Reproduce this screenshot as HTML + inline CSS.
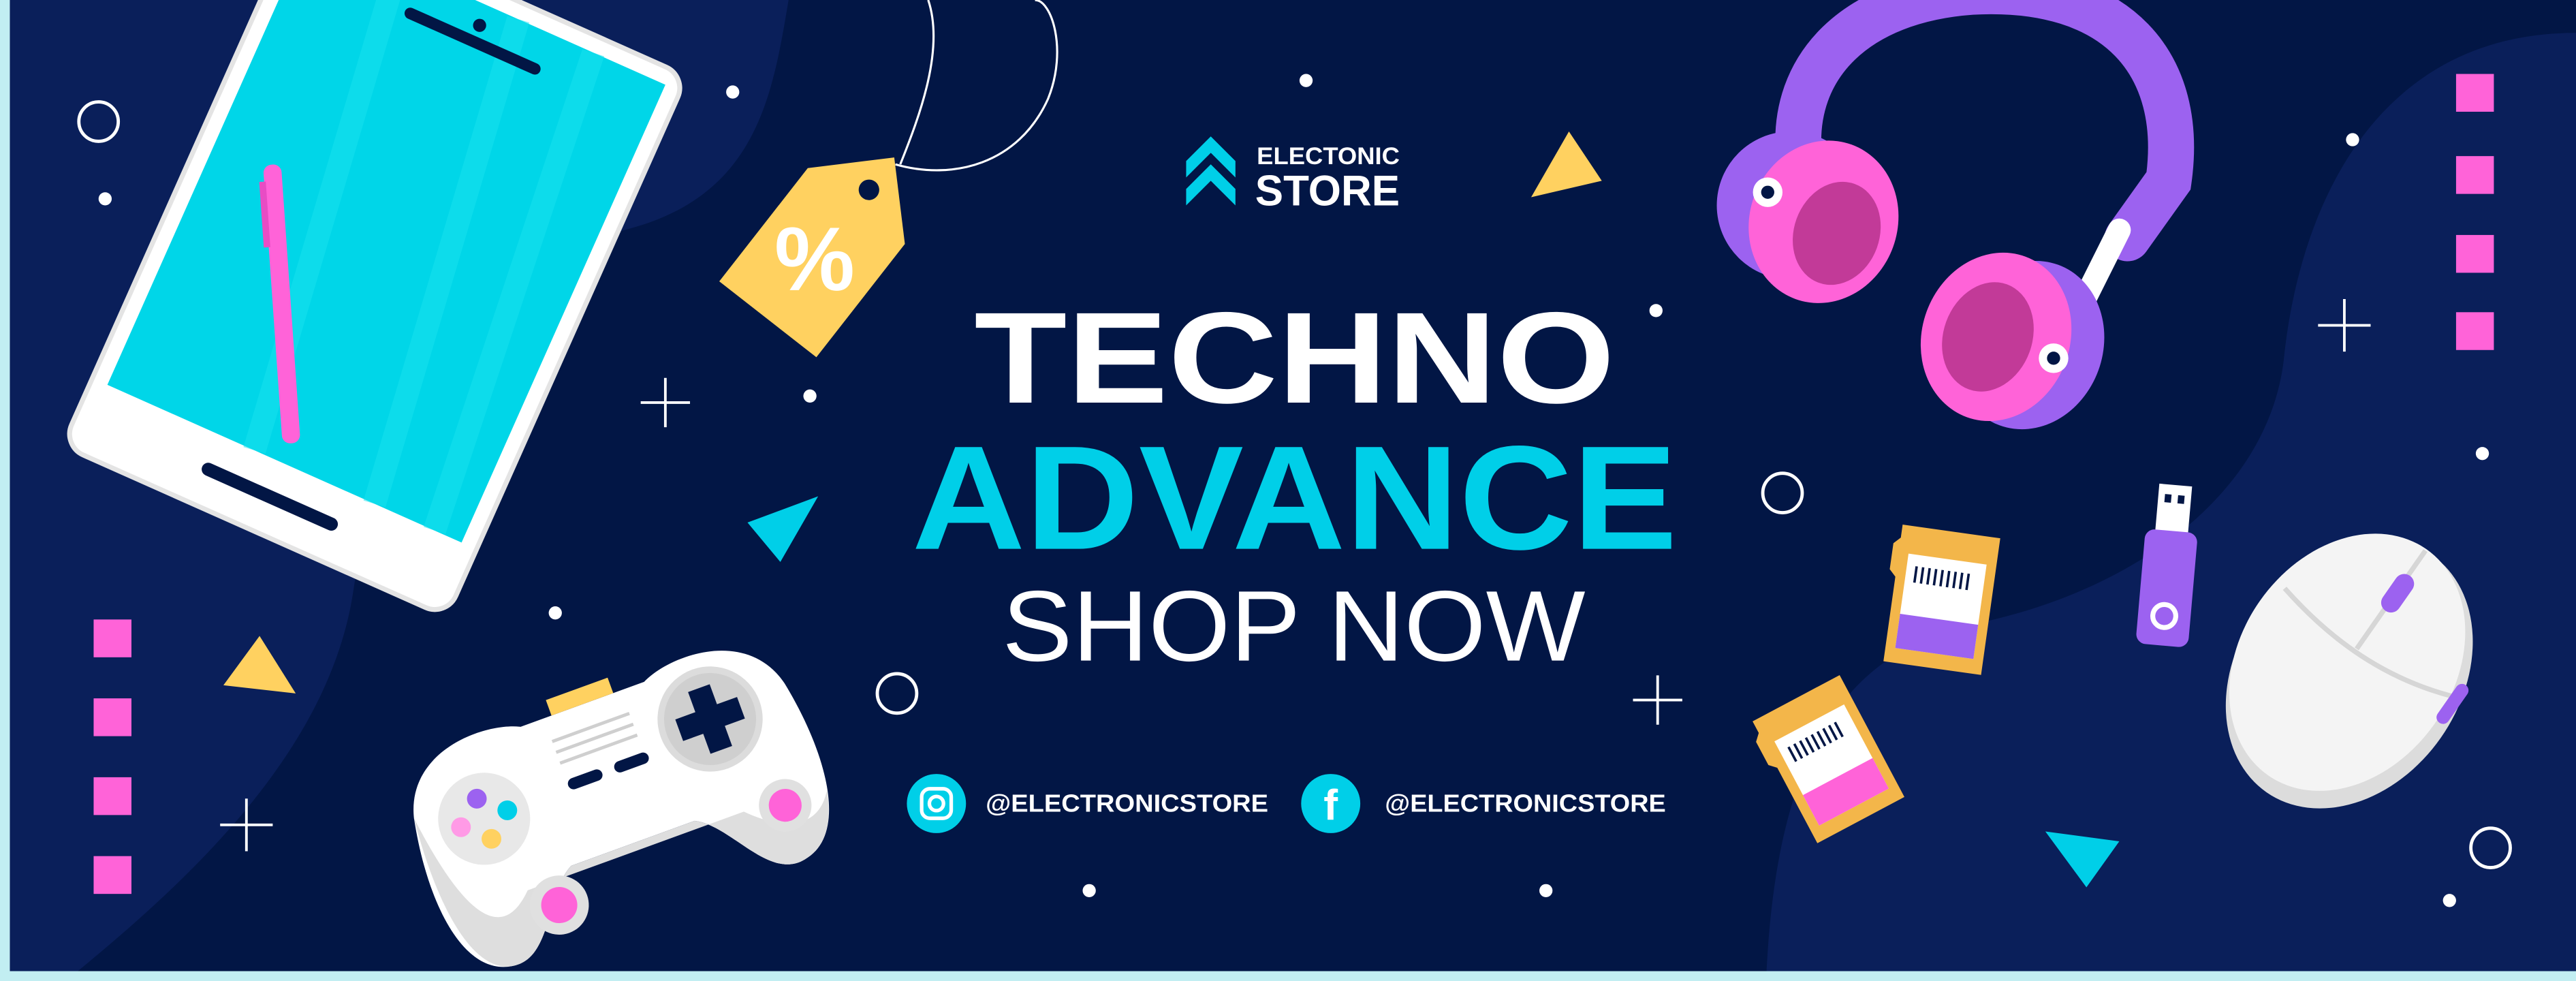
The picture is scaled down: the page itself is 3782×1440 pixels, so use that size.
<!DOCTYPE html>
<html><head><meta charset="utf-8"><style>
html,body{margin:0;padding:0;background:#021645;}
svg{display:block;}
text{font-family:"Liberation Sans",sans-serif;}
</style></head><body>
<svg width="3782" height="1440" viewBox="0 0 1568 597" preserveAspectRatio="none" xmlns="http://www.w3.org/2000/svg">
<rect width="1568" height="597" fill="#021645"/>
<path d="M0 0 H480 C470 60 460 120 380 140 C300 160 230 260 215 360 C200 460 110 540 40 597 H0Z" fill="#0a1f5a"/>
<path d="M1568 20 C1450 20 1400 120 1390 220 C1380 300 1300 360 1200 380 C1110 400 1080 480 1075 597 H1568Z" fill="#0a1f5a"/>
<rect x="0" y="0" width="6" height="597" fill="#c2eef2"/>
<rect x="0" y="591" width="1568" height="6" fill="#c2eef2"/>

<g transform="translate(224,168) rotate(24)">
<rect x="-128" y="-190" width="256" height="360" rx="14" fill="#ffffff"/>
<rect x="-128" y="-190" width="256" height="360" rx="14" fill="none" stroke="#e4e4e4" stroke-width="3"/>
<rect x="-118" y="-180" width="236" height="305" fill="#00d6e8"/>
<path d="M-60 -180 L-20 125 M20 -180 L60 125 M70 -180 L100 125" stroke="#1be2ef" stroke-width="14" opacity="0.5"/>
<rect x="-45" y="143" width="90" height="8" rx="4" fill="#021645"/>
<rect x="-45" y="-160" width="90" height="7" rx="3.5" fill="#021645"/>
<circle cx="0" cy="-167" r="4" fill="#021645"/>
</g>
<g transform="translate(171,185) rotate(-4)">
<rect x="-5" y="-85" width="11" height="170" rx="5" fill="#ff63d8"/>
<rect x="-8" y="-75" width="4" height="40" fill="#e84cc4"/>
</g>

<path d="M545 100 C580 110 620 100 638 60 C650 30 640 0 630 0 M548 100 C560 70 575 30 565 0" stroke="#fff" stroke-width="1.3" fill="none"/>
<g transform="translate(502,150) rotate(-52) scale(1.25)">
<path d="M-45 -30 H25 L55 0 L25 30 H-45Z" fill="#ffd160"/>
<circle cx="35" cy="0" r="5" fill="#021645"/>
<text x="-8" y="0" font-size="44" font-weight="bold" fill="#fff" text-anchor="middle" dominant-baseline="central" transform="rotate(52 -8 0)">%</text>
</g>

<g fill="none" stroke="#fff" stroke-width="2">
<circle cx="60" cy="74" r="12"/><circle cx="1085" cy="300" r="12"/><circle cx="546" cy="422" r="12"/><circle cx="1516" cy="516" r="12"/>
</g>
<g stroke="#fff" stroke-width="1.6">
<path d="M390 245 H420 M405 230 V260"/><path d="M994 426 H1024 M1009 411 V441"/><path d="M134 502 H166 M150 486 V518"/><path d="M1411 198 H1443 M1427 182 V214"/>
</g>
<g fill="#fff">
<circle cx="64" cy="121" r="4"/><circle cx="446" cy="56" r="4"/><circle cx="795" cy="49" r="4"/><circle cx="493" cy="241" r="4"/><circle cx="1008" cy="189" r="4"/><circle cx="338" cy="373" r="4"/><circle cx="663" cy="542" r="4"/><circle cx="941" cy="542" r="4"/><circle cx="1432" cy="85" r="4"/><circle cx="1511" cy="276" r="4"/><circle cx="1491" cy="548" r="4"/>
</g>
<polygon points="955,80 975,110 932,120" fill="#ffd160"/>
<polygon points="158,387 180,422 136,417" fill="#ffd160"/>
<polygon points="455,318 498,302 475,342" fill="#00cfe8"/>
<polygon points="1245,506 1290,512 1270,540" fill="#00cfe8"/>
<g fill="#ff63d8">
<rect x="1495" y="45" width="23" height="23"/><rect x="1495" y="95" width="23" height="23"/><rect x="1495" y="143" width="23" height="23"/><rect x="1495" y="190" width="23" height="23"/>
<rect x="57" y="377" width="23" height="23"/><rect x="57" y="425" width="23" height="23"/><rect x="57" y="473" width="23" height="23"/><rect x="57" y="521" width="23" height="23"/>
</g>

<path d="M722 98 L737 83 L752 98 V108 L737 93 L722 108Z M722 115 L737 100 L752 115 V125 L737 110 L722 125Z" fill="#00cfe8"/>
<text x="765" y="100" font-size="14.5" font-weight="bold" fill="#fff" textLength="87" lengthAdjust="spacingAndGlyphs">ELECTONIC</text>
<text x="764" y="125" font-size="26" font-weight="bold" fill="#fff" textLength="88" lengthAdjust="spacingAndGlyphs">STORE</text>

<text x="593" y="245" font-size="79" font-weight="bold" fill="#fff" textLength="390" lengthAdjust="spacingAndGlyphs">TECHNO</text>
<text x="555" y="334" font-size="90" font-weight="bold" fill="#00cfe8" textLength="466" lengthAdjust="spacingAndGlyphs">ADVANCE</text>
<text x="610" y="402" font-size="61" fill="#fff" textLength="355" lengthAdjust="spacingAndGlyphs">SHOP NOW</text>

<circle cx="570" cy="489" r="18" fill="#00cfe8"/>
<rect x="561" y="480" width="18" height="18" rx="5" fill="none" stroke="#fff" stroke-width="2.2"/>
<circle cx="570" cy="489" r="4.3" fill="none" stroke="#fff" stroke-width="2.2"/>
<text x="600" y="494" font-size="15" font-weight="bold" fill="#fff" textLength="172" lengthAdjust="spacingAndGlyphs">@ELECTRONICSTORE</text>
<circle cx="810" cy="489" r="18" fill="#00cfe8"/>
<text x="810" y="499" font-size="26" font-weight="bold" fill="#fff" text-anchor="middle">f</text>
<text x="843" y="494" font-size="15" font-weight="bold" fill="#fff" textLength="171" lengthAdjust="spacingAndGlyphs">@ELECTRONICSTORE</text>

<g transform="translate(375,485) rotate(-20)">
<path d="M-120 -30 C-110 -70 -60 -70 -40 -60 H40 C60 -70 110 -70 120 -30 C130 20 125 70 95 75 C70 80 60 40 40 30 H-40 C-60 40 -70 80 -95 75 C-125 70 -130 20 -120 -30Z" fill="#fff"/>
<path d="M-120 -30 C-125 20 -120 70 -95 75 C-70 80 -60 40 -40 30 H40 C60 40 70 80 95 75 C110 72 118 60 122 40 C110 60 90 55 70 35 H-70 C-90 55 -110 50 -120 -30Z" fill="#dedede"/>
<circle cx="70" cy="-25" r="32" fill="#dcdcdc"/><circle cx="70" cy="-25" r="28" fill="#cfcfcf"/>
<path d="M63 -45 H77 V-32 H90 V-18 H77 V-5 H63 V-18 H50 V-32 H63Z" fill="#021645"/>
<circle cx="-80" cy="-15" r="28" fill="#e8e8e8"/>
<circle cx="-95" cy="-15" r="6" fill="#ff9ae6"/><circle cx="-80" cy="-28" r="6" fill="#9c62f0"/><circle cx="-80" cy="-2" r="6" fill="#ffd160"/><circle cx="-65" cy="-15" r="6" fill="#00cfe8"/>
<circle cx="-55" cy="50" r="18" fill="#e0e0e0"/><circle cx="-55" cy="50" r="11" fill="#ff63d8"/>
<circle cx="95" cy="40" r="16" fill="#e0e0e0"/><circle cx="95" cy="40" r="10" fill="#ff63d8"/>
<rect x="-20" y="-70" width="40" height="10" fill="#ffd160"/>
<rect x="-25" y="-20" width="22" height="7" rx="3.5" fill="#021645"/><rect x="5" y="-20" width="22" height="7" rx="3.5" fill="#021645"/>
<path d="M-25 -45 H25 M-25 -38 H25 M-25 -31 H25" stroke="#cfcfcf" stroke-width="2"/>
</g>

<path d="M1095 95 C1090 40 1130 0 1200 -5 C1290 -10 1330 40 1320 110 L1295 145" stroke="#9c62f0" stroke-width="28" fill="none" stroke-linecap="round"/>
<path d="M1102 90 L1088 120 M1290 140 L1255 210" stroke="#fff" stroke-width="14" stroke-linecap="round"/>
<ellipse cx="1090" cy="125" rx="45" ry="45" fill="#9c62f0"/>
<ellipse cx="1110" cy="135" rx="45" ry="50" fill="#ff63d8" transform="rotate(20 1110 135)"/>
<ellipse cx="1118" cy="142" rx="26" ry="32" fill="#c23a98" transform="rotate(20 1118 142)"/>
<ellipse cx="1235" cy="210" rx="45" ry="52" fill="#9c62f0" transform="rotate(20 1235 210)"/>
<ellipse cx="1215" cy="205" rx="45" ry="52" fill="#ff63d8" transform="rotate(20 1215 205)"/>
<ellipse cx="1210" cy="205" rx="27" ry="34" fill="#c23a98" transform="rotate(20 1210 205)"/>
<circle cx="1076" cy="117" r="9" fill="#fff"/><circle cx="1076" cy="117" r="4" fill="#021645"/>
<circle cx="1250" cy="218" r="9" fill="#fff"/><circle cx="1250" cy="218" r="4" fill="#021645"/>

<g transform="translate(1182,365) rotate(8)">
<path d="M-30 -42 H30 V42 H-30 V-10 L-34 -14 V-30 L-30 -34Z" fill="#f3b64a"/>
<rect x="-24" y="-25" width="48" height="58" fill="#fff"/>
<rect x="-24" y="12" width="48" height="21" fill="#9c62f0"/>
<path d="M-18 -18 V-8 M-14 -18 V-8 M-10 -18 V-8 M-6 -18 V-8 M-2 -18 V-8 M2 -18 V-8 M6 -18 V-8 M10 -18 V-8 M14 -18 V-8" stroke="#021645" stroke-width="1.5"/>
</g>
<g transform="translate(1113,462) rotate(-28)">
<path d="M-30 -42 H30 V42 H-30 V-10 L-34 -14 V-30 L-30 -34Z" fill="#f3b64a"/>
<rect x="-24" y="-25" width="48" height="58" fill="#fff"/>
<rect x="-24" y="12" width="48" height="21" fill="#ff63d8"/>
<path d="M-18 -18 V-8 M-14 -18 V-8 M-10 -18 V-8 M-6 -18 V-8 M-2 -18 V-8 M2 -18 V-8 M6 -18 V-8 M10 -18 V-8 M14 -18 V-8" stroke="#021645" stroke-width="1.5"/>
</g>

<g transform="translate(1320,345) rotate(5)">
<rect x="-10" y="-50" width="20" height="30" fill="#fff"/>
<rect x="-6" y="-44" width="4" height="5" fill="#021645"/><rect x="2" y="-44" width="4" height="5" fill="#021645"/>
<rect x="-16" y="-22" width="32" height="70" rx="6" fill="#9c62f0"/>
<circle cx="0" cy="30" r="7" fill="none" stroke="#fff" stroke-width="3"/>
</g>

<g transform="translate(1430,410) rotate(35)">
<ellipse cx="0" cy="0" rx="68" ry="88" fill="#dcdcdc"/>
<ellipse cx="-5" cy="-5" rx="65" ry="84" fill="#f4f4f4"/>
<path d="M-62 -20 C-20 -10 20 -10 60 -25 M-5 -88 V-15" stroke="#d6d6d6" stroke-width="3" fill="none"/>
<rect x="-10" y="-70" width="12" height="26" rx="6" fill="#9c62f0"/>
<rect x="58" y="-35" width="8" height="28" rx="4" fill="#9c62f0"/>
</g>
</svg>
</body></html>
